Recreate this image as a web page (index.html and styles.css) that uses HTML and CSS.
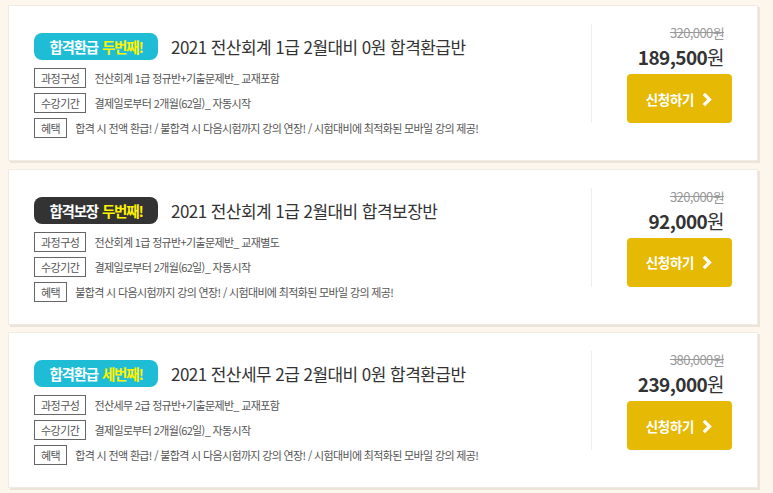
FILE: index.html
```html
<!DOCTYPE html>
<html lang="ko">
<head>
<meta charset="utf-8">
<title>합격환급반</title>
<link rel="stylesheet" href="styles.css">
</head>
<body>
<div class="list">
  <div class="card">
    <div class="info">
      <div class="head">
        <span class="badge cyan">합격환급 <em>두번째!</em></span>
        <h2 class="title">2021 전산회계 1급 2월대비 0원 합격환급반</h2>
      </div>
      <div class="row"><span class="label">과정구성</span><span class="text">전산회계 1급 정규반+기출문제반_ 교재포함</span></div>
      <div class="row"><span class="label">수강기간</span><span class="text">결제일로부터 2개월(62일)_ 자동시작</span></div>
      <div class="row"><span class="label">혜택</span><span class="text">합격 시 전액 환급! / 불합격 시 다음시험까지 강의 연장! / 시험대비에 최적화된 모바일 강의 제공!</span></div>
    </div>
    <div class="buy">
      <div class="old">320,000원</div>
      <div class="price">189,500<span class="won">원</span></div>
      <a class="btn" href="#">신청하기 <svg class="chev" width="11" height="13" viewBox="0 0 11 13"><path d="M3 2 L7.5 6.5 L3 11" fill="none" stroke="#fff" stroke-width="3.2" stroke-linecap="square"/></svg></a>
    </div>
  </div>

  <div class="card">
    <div class="info">
      <div class="head">
        <span class="badge dark">합격보장 <em>두번째!</em></span>
        <h2 class="title">2021 전산회계 1급 2월대비 합격보장반</h2>
      </div>
      <div class="row"><span class="label">과정구성</span><span class="text">전산회계 1급 정규반+기출문제반_ 교재별도</span></div>
      <div class="row"><span class="label">수강기간</span><span class="text">결제일로부터 2개월(62일)_ 자동시작</span></div>
      <div class="row"><span class="label">혜택</span><span class="text">불합격 시 다음시험까지 강의 연장! / 시험대비에 최적화된 모바일 강의 제공!</span></div>
    </div>
    <div class="buy">
      <div class="old">320,000원</div>
      <div class="price">92,000<span class="won">원</span></div>
      <a class="btn" href="#">신청하기 <svg class="chev" width="11" height="13" viewBox="0 0 11 13"><path d="M3 2 L7.5 6.5 L3 11" fill="none" stroke="#fff" stroke-width="3.2" stroke-linecap="square"/></svg></a>
    </div>
  </div>

  <div class="card">
    <div class="info">
      <div class="head">
        <span class="badge cyan">합격환급 <em>세번째!</em></span>
        <h2 class="title">2021 전산세무 2급 2월대비 0원 합격환급반</h2>
      </div>
      <div class="row"><span class="label">과정구성</span><span class="text">전산세무 2급 정규반+기출문제반_ 교재포함</span></div>
      <div class="row"><span class="label">수강기간</span><span class="text">결제일로부터 2개월(62일)_ 자동시작</span></div>
      <div class="row"><span class="label">혜택</span><span class="text">합격 시 전액 환급! / 불합격 시 다음시험까지 강의 연장! / 시험대비에 최적화된 모바일 강의 제공!</span></div>
    </div>
    <div class="buy">
      <div class="old">380,000원</div>
      <div class="price">239,000<span class="won">원</span></div>
      <a class="btn" href="#">신청하기 <svg class="chev" width="11" height="13" viewBox="0 0 11 13"><path d="M3 2 L7.5 6.5 L3 11" fill="none" stroke="#fff" stroke-width="3.2" stroke-linecap="square"/></svg></a>
    </div>
  </div>
</div>
</body>
</html>
```

FILE: styles.css
```css
* { box-sizing: border-box; }
html, body { margin: 0; padding: 0; }
body {
  background: #fdf6ec;
  font-family: "Noto Sans CJK KR", "Noto Sans", sans-serif;
  color: #333;
  width: 773px;
  height: 493px;
  overflow: hidden;
}
.list {
  padding: 5px 15px 0 8px;
  display: flex;
  flex-direction: column;
  gap: 7.5px;
}
.card {
  height: 156px;
  background: #fff;
  border: 1px solid #f1ebe3;
  box-shadow: 2px 2px 0 #ebe4da;
  display: flex;
  width: 750px;
}
.info {
  flex: 1;
  padding: 27px 0 0 25px;
  display: flex;
  flex-direction: column;
}
.head {
  display: flex;
  align-items: center;
  gap: 13px;
  height: 27px;
  margin-bottom: 8px;
}
.badge {
  display: inline-flex;
  align-items: center;
  justify-content: center;
  width: 124px;
  height: 27px;
  border-radius: 8px;
  color: #fff;
  font-weight: 700;
  font-size: 14.5px;
  letter-spacing: -1.2px;
  word-spacing: 2px;
}
.badge em { font-style: normal; color: #fff200; margin-left: 4px; }
.badge.cyan { background: #1ebdd5; }
.badge.dark { background: #333333; }
.title {
  margin: 0;
  font-size: 17px;
  font-weight: 400;
  letter-spacing: -0.55px;
  color: #333;
  line-height: 27px;
}
.row {
  display: flex;
  align-items: center;
  height: 20px;
  margin-bottom: 5px;
}
.label {
  border: 1px solid #666;
  height: 20px;
  padding: 0 6px;
  display: inline-flex;
  align-items: center;
  font-size: 11px;
  letter-spacing: -0.5px;
  color: #555;
  margin-right: 8px;
}
.text {
  font-size: 11px;
  letter-spacing: -0.65px;
  color: #555;
}
.buy {
  align-self: flex-start;
  margin-top: 18px;
  width: 166px;
  height: 99px;
  border-left: 1px solid #eeeeee;
  padding: 0 25px 0 34px;
  display: flex;
  flex-direction: column;
  align-items: flex-end;
}
.old {
  height: 18px;
  line-height: 18px;
  font-size: 13px;
  color: #999;
  text-decoration: line-through;
  letter-spacing: -0.6px;
  padding-right: 8px;
}
.price {
  height: 30px;
  line-height: 30px;
  font-size: 19px;
  font-weight: 700;
  color: #333;
  letter-spacing: -0.6px;
  padding-right: 8px;
  margin-bottom: 2px;
}
.price .won { font-weight: 400; font-size: 19px; }
.btn {
  width: 105px;
  height: 49px;
  background: #e6b905;
  border-radius: 4px;
  color: #fff;
  text-decoration: none;
  font-size: 13.5px;
  font-weight: 700;
  display: flex;
  align-items: center;
  justify-content: center;
  gap: 8px;
  letter-spacing: -0.3px;
}
.chev { display: block; margin-top: 1px; }
```
